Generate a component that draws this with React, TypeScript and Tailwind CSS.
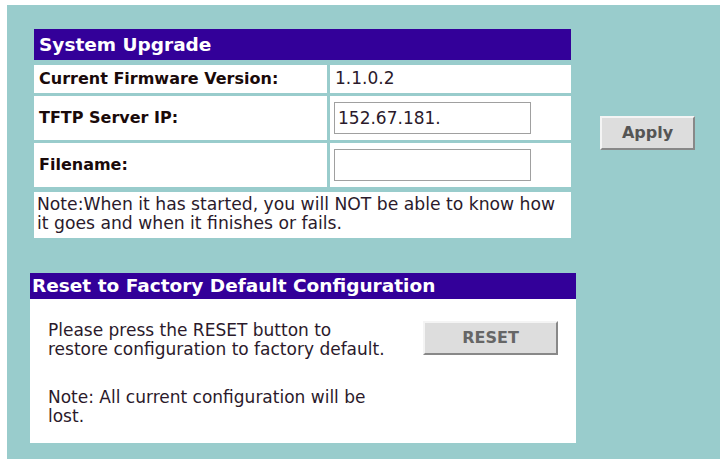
export default function App() {
  const font = "font-['DejaVu_Sans',Verdana,sans-serif]"
  return (
    <div className={`min-h-screen bg-white pt-[5px] pl-[7px] ${font}`}>
      <div className="h-[454px] bg-[#99cccc] pt-[24px] pl-[23px]">
        {/* System Upgrade */}
        <div className="flex items-start">
          <div className="ml-[4px] flex w-[537px] flex-col">
            <div className="flex h-[31px] items-center bg-[#330099] pl-[5px] text-[18.5px] font-bold text-white">
              System Upgrade
            </div>
            <div className="mt-[5px] flex h-[28px] gap-[3px]">
              <div className="flex w-[293px] items-center bg-white pl-[5px] text-[16px] font-bold text-[#1a0a0a]">
                Current Firmware Version:
              </div>
              <div className="flex flex-1 items-center bg-white pl-[5px] text-[17px] text-[#2b1a2b]">
                1.1.0.2
              </div>
            </div>
            <div className="mt-[3px] flex h-[44px] gap-[3px]">
              <div className="flex w-[293px] items-center bg-white pl-[5px] text-[16px] font-bold text-[#1a0a0a]">
                TFTP Server IP:
              </div>
              <div className="flex flex-1 items-center bg-white pl-[4px]">
                <input
                  defaultValue="152.67.181."
                  className="h-[32px] w-[197px] border border-[#a0a0a0] bg-white px-[3px] text-[17px] text-[#2b1a2b] outline-none"
                />
              </div>
            </div>
            <div className="mt-[3px] flex h-[44px] gap-[3px]">
              <div className="flex w-[293px] items-center bg-white pl-[5px] text-[16px] font-bold text-[#1a0a0a]">
                Filename:
              </div>
              <div className="flex flex-1 items-center bg-white pl-[4px]">
                <input className="h-[32px] w-[197px] border border-[#a0a0a0] bg-white px-[3px] text-[17px] outline-none" />
              </div>
            </div>
            <div className="mt-[5px] h-[46px] bg-white px-[3px] pt-[3px] text-[17.2px] leading-[19px] whitespace-nowrap text-[#2b1a2b]">
              Note:When it has started, you will NOT be able to know how
              <br />
              it goes and when it finishes or fails.
            </div>
          </div>
          <button className="mt-[87px] ml-[29px] h-[34px] w-[95px] border-2 border-t-[#f4f4f4] border-l-[#f4f4f4] border-r-[#888888] border-b-[#888888] bg-[#dddddd] text-[16px] font-bold text-[#555555]">
            Apply
          </button>
        </div>

        {/* Reset to Factory Default Configuration */}
        <div className="mt-[35px] w-[546px]">
          <div className="flex h-[26px] items-center bg-[#330099] pl-[2px] text-[18.5px] font-bold whitespace-nowrap text-white">
            Reset to Factory Default Configuration
          </div>
          <div className="flex h-[144px] items-start bg-white pt-[22px] pl-[18px]">
            <div className="w-[360px] text-[17px] leading-[19px] whitespace-nowrap text-[#2b1a2b]">
              <p>
                Please press the RESET button to
                <br />
                restore configuration to factory default.
              </p>
              <p className="mt-[29px]">
                Note: All current configuration will be
                <br />
                lost.
              </p>
            </div>
            <button className="ml-[15px] h-[34px] w-[135px] border-2 border-t-[#f4f4f4] border-l-[#f4f4f4] border-r-[#888888] border-b-[#888888] bg-[#dddddd] text-[16px] font-bold text-[#666666]">
              RESET
            </button>
          </div>
        </div>
      </div>
    </div>
  )
}
